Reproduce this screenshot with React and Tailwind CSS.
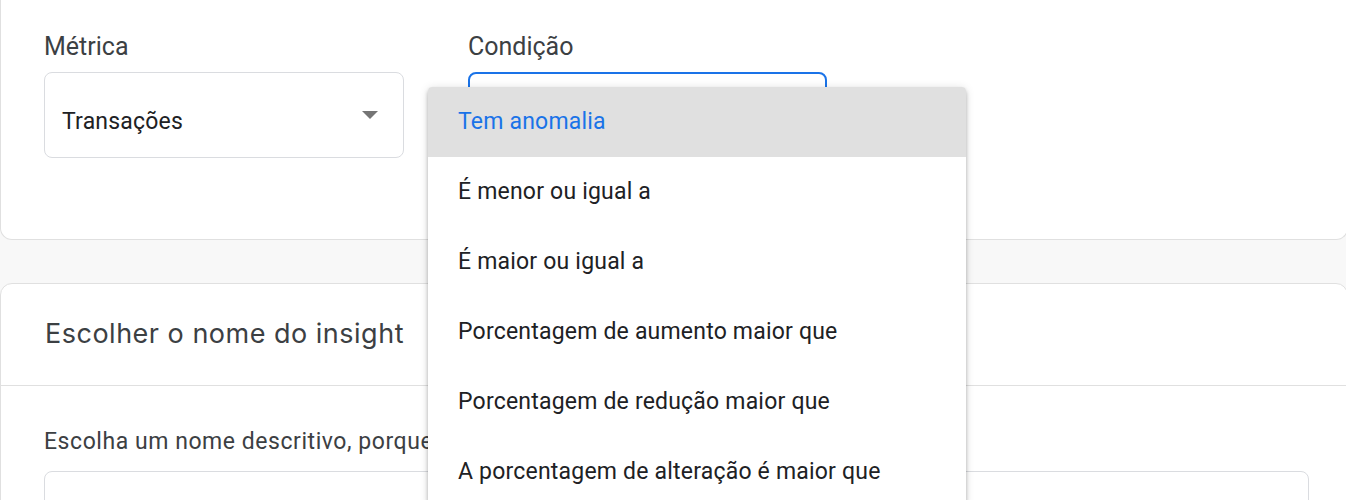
import React from 'react';

const conditions = [
    'Tem anomalia',
    'É menor ou igual a',
    'É maior ou igual a',
    'Porcentagem de aumento maior que',
    'Porcentagem de redução maior que',
    'A porcentagem de alteração é maior que',
];

const SelectBox = ({ value, focused }) => (
    <div
        className={`h-[86px] rounded-[8px] flex items-center justify-between pl-[17px] pr-[25px] bg-white ${
            focused ? 'border-2 border-[#1a73e8]' : 'border border-[#dadce0]'
        }`}
    >
        <span className="pt-[14px] text-[23px] leading-[26px] tracking-[0.2px] text-[#202124]">{value}</span>
        {/* dropdown arrow */}
        <svg width="16" height="8" viewBox="0 0 16 8">
            <path d="M0 0h16L8 8z" fill="#757575" />
        </svg>
    </div>
);

const App = () => {
    const selected = 0;

    return (
        <div
            className="w-[1346px] h-[500px] overflow-hidden bg-[#f8f8f8]"
            style={{ fontFamily: 'Roboto, "Liberation Sans", sans-serif' }}
        >
            {/* Metric / condition card */}
            <div className="w-[1348px] bg-white border border-t-0 border-[#e0e0e0] rounded-b-[12px] pt-[32px] pb-[81px] pl-[43px]">
                <div className="flex gap-[64px]">
                    <div className="w-[360px]">
                        <div className="text-[25px] leading-[30px] text-[#3c4043]">Métrica</div>
                        <div className="mt-[10px]">
                            <SelectBox value="Transações" />
                        </div>
                    </div>

                    <div className="w-[359px]">
                        <div className="text-[25px] leading-[30px] text-[#3c4043]">Condição</div>
                        <div className="mt-[10px] relative">
                            <SelectBox value="" focused />

                            {/* Open menu */}
                            <div className="absolute left-[-40px] top-[15px] w-[538px] z-10 bg-white rounded-[4px] overflow-hidden shadow-[0_2px_4px_-1px_rgba(0,0,0,0.2),0_4px_5px_0_rgba(0,0,0,0.14),0_1px_10px_0_rgba(0,0,0,0.12)]">
                                {conditions.map((item, index) => (
                                    <div
                                        key={index}
                                        className={`h-[70px] flex items-center pl-[30px] text-[23px] tracking-[0.2px] ${
                                            index === selected ? 'bg-[#e0e0e0] text-[#1a73e8]' : 'text-[#202124]'
                                        }`}
                                    >
                                        {item}
                                    </div>
                                ))}
                            </div>
                        </div>
                    </div>
                </div>
            </div>

            {/* Insight name card */}
            <div className="mt-[43px] w-[1348px] bg-white border border-[#e0e0e0] rounded-[12px]">
                <div
                    className="h-[102px] flex items-center pl-[44px] border-b border-[#e0e0e0] text-[27px] tracking-[0.5px] text-[#3c4043]"
                    style={{ fontFamily: 'Inter, "Open Sans", sans-serif' }}
                >
                    Escolher o nome do insight
                </div>
                <div className="pt-[42px] pl-[43px]">
                    <div className="text-[23px] leading-[28px] tracking-[0.55px] text-[#3c4043]">
                        Escolha um nome descritivo, porque ele aparece nos alertas.
                    </div>
                    <div className="mt-[15px] w-[1265px] h-[80px] border border-[#dadce0] rounded-[8px]"></div>
                </div>
            </div>
        </div>
    );
};

export default App;
